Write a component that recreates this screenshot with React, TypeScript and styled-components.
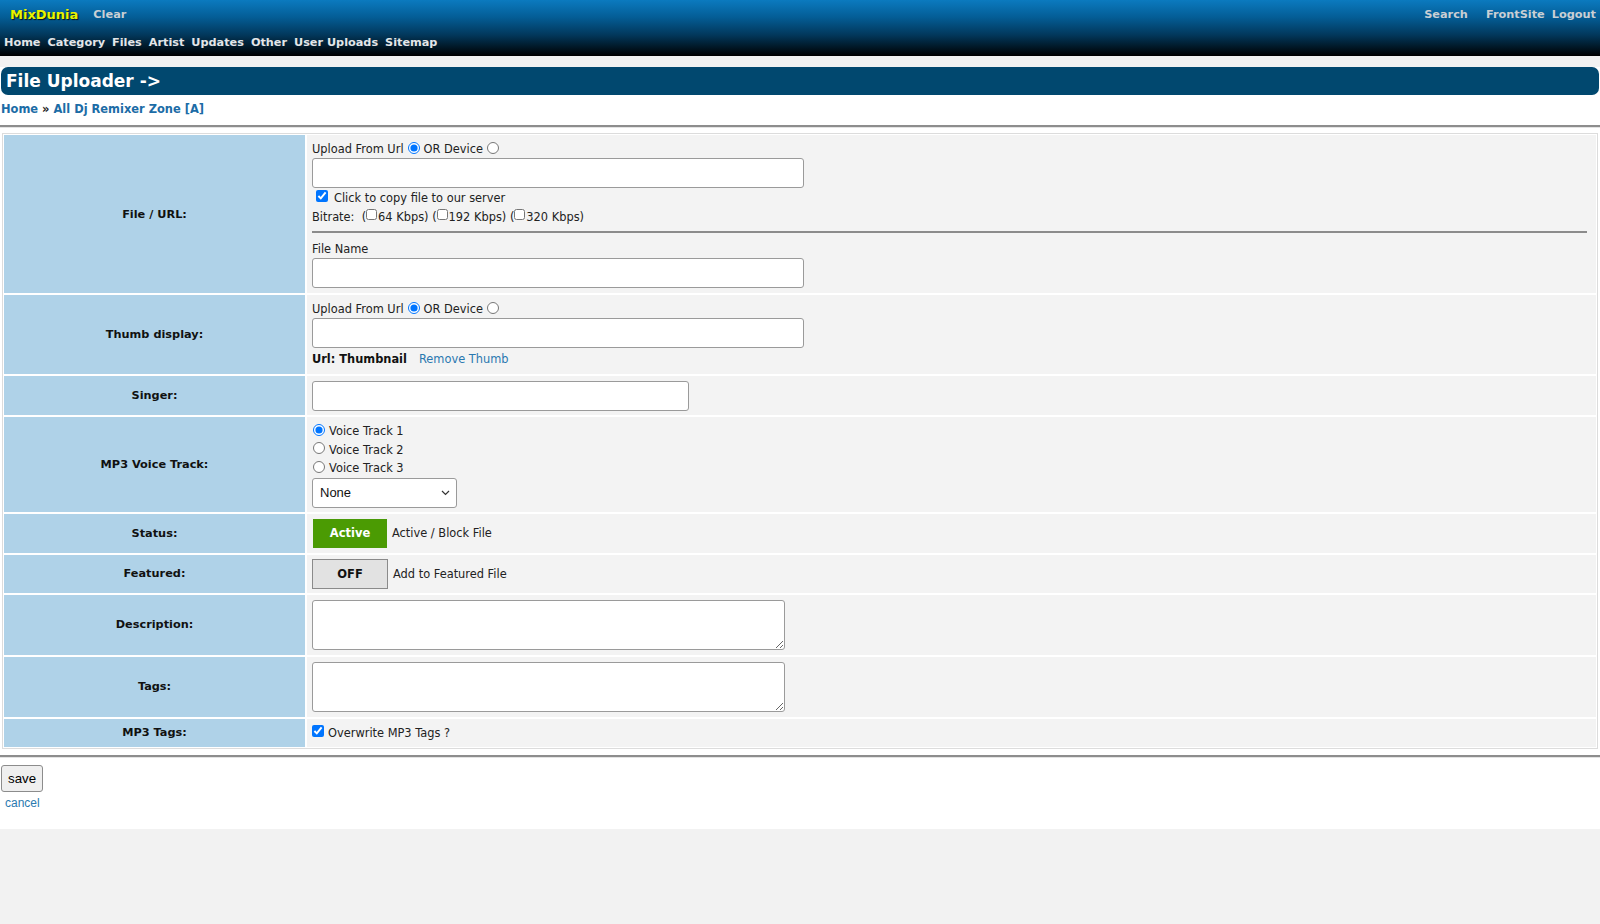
import React, { useState } from 'react'
import styled, { createGlobalStyle } from 'styled-components'

const GlobalStyle = createGlobalStyle`
  html, body {
    margin: 0;
    padding: 0;
    background: #f2f2f2;
    font-family: "DejaVu Sans", Verdana, sans-serif;
  }
  * { box-sizing: border-box; }
`

const Header = styled.header`
  height: 56px;
  background: linear-gradient(#0b7abf 0%, #045e97 30%, #02385c 62%, #000 100%);
  display: flex;
  flex-direction: column;
`

const TopRow = styled.div`
  height: 28px;
  display: flex;
  align-items: center;
  padding: 0 4px 0 10px;
`

const Logo = styled.a`
  font-weight: bold;
  font-size: 13px;
  color: #e8f400;
  text-shadow: 1px 1px 1px #111;
  text-decoration: none;
`

const TopLink = styled.a<{ $gap?: number }>`
  font-weight: bold;
  font-size: 11.3px;
  color: #c9cfd4;
  text-decoration: none;
  margin-left: ${p => p.$gap ?? 0}px;
`

const Spacer = styled.div`
  flex: 1;
`

const NavRow = styled.nav`
  height: 28px;
  display: flex;
  align-items: center;
  gap: 7px;
  padding: 0 4px;
`

const NavLink = styled.a`
  font-weight: bold;
  font-size: 11.25px;
  color: #e4e6e8;
  text-decoration: none;
`

const Main = styled.main`
  margin-top: 11px;
  background: #fff;
  padding-bottom: 19px;
`

const TitleBar = styled.h1`
  margin: 0 1px;
  height: 28px;
  border-radius: 7px;
  background: #01486f;
  color: #fff;
  font-size: 17px;
  font-weight: bold;
  line-height: 28px;
  padding-left: 5px;
`

const Crumbs = styled.div`
  padding: 7px 1px 0;
  height: 26px;
  font-size: 11.45px;
  font-weight: bold;
  color: #222;
`

const CrumbLink = styled.a`
  color: #1c6ca6;
  text-decoration: none;
`

const Rule = styled.hr<{ $after?: boolean }>`
  margin: ${p => (p.$after ? '6px 0 7px' : '4px 0 5px')};
  border: 0;
  border-top: 2px solid #8d8d8d;
  border-bottom: 1px solid #e3e3e3;
`

const FormGrid = styled.div`
  margin: 0 2px;
  border: 1px solid #dcdcdc;
  padding: 1px;
  display: grid;
  grid-template-columns: 301px 1fr;
  gap: 2px;
`

const LabelCell = styled.div`
  background: #afd2e8;
  display: flex;
  align-items: center;
  justify-content: center;
  font-weight: bold;
  font-size: 11.3px;
  color: #111;
`

const ValueCell = styled.div<{ $pad?: string }>`
  background: #f3f3f3;
  padding: ${p => p.$pad ?? '5px 5px'};
  font-size: 11.4px;
  color: #222;
`

const Line = styled.div<{ $h?: number }>`
  height: ${p => p.$h ?? 18}px;
  display: flex;
  align-items: center;
  white-space: pre;
`

const Radio = styled.input.attrs({ type: 'radio' })`
  margin: 0 4px 3px 4px;
  width: 12px;
  height: 12px;
`

const LeftRadio = styled(Radio)`
  margin: 0 4px 3px 1px;
`

const Check = styled.input.attrs({ type: 'checkbox' })<{ $small?: boolean }>`
  margin: ${p => (p.$small ? '0 1px 5px 0' : '0 6px 3px 4px')};
  width: ${p => (p.$small ? 11 : 12)}px;
  height: ${p => (p.$small ? 11 : 12)}px;
`

const TextBox = styled.input<{ $w: number }>`
  display: block;
  width: ${p => p.$w}px;
  height: 30px;
  border: 1px solid #9a9a9a;
  border-radius: 3px;
  background: #fff;
  font-size: 12px;
  padding: 0 6px;
`

const CellRule = styled.hr`
  margin: 4px 4px 7px 0;
  border: 0;
  border-top: 2px solid #8b8b8b;
`

const Bold = styled.span`
  font-weight: bold;
  color: #111;
`

const BlueLink = styled.a<{ $gap?: number }>`
  color: #2a78b0;
  text-decoration: none;
  margin-left: ${p => p.$gap ?? 0}px;
`

const SelectWrap = styled.div`
  position: relative;
  width: 145px;
  height: 30px;
`

const Select = styled.select`
  display: block;
  appearance: none;
  width: 145px;
  height: 30px;
  border: 1px solid #9a9a9a;
  border-radius: 3px;
  background: #fff;
  font-family: "Liberation Sans", Arial, sans-serif;
  font-size: 13px;
  padding: 0 7px;
  color: #111;
`

const Chevron = styled.svg`
  position: absolute;
  right: 7px;
  top: 12px;
  pointer-events: none;
`

const ButtonRow = styled.div`
  display: flex;
  align-items: center;
  gap: 5px;
`

const Toggle = styled.button<{ $on: boolean }>`
  width: ${p => (p.$on ? 74 : 76)}px;
  height: ${p => (p.$on ? 29 : 30)}px;
  margin-left: ${p => (p.$on ? 1 : 0)}px;
  border: 1px solid ${p => (p.$on ? '#4a9a08' : '#8a8a8a')};
  background: ${p => (p.$on ? '#4b9b03' : '#e2e2e2')};
  color: ${p => (p.$on ? '#fff' : '#111')};
  font-family: "DejaVu Sans", Verdana, sans-serif;
  font-weight: bold;
  font-size: 11.5px;
  padding: 0;
  cursor: pointer;
`

const TextArea = styled.textarea`
  display: block;
  width: 473px;
  height: 50px;
  border: 1px solid #9a9a9a;
  border-radius: 3px;
  background: #fff;
  resize: both;
`

const Footer = styled.div`
  padding: 0 1px;
`

const SaveButton = styled.button`
  display: block;
  height: 27px;
  padding: 0 6px;
  font-family: "Liberation Sans", Arial, sans-serif;
  font-size: 13.3px;
  color: #000;
  background: #efefef;
  border: 1px solid #8c8c8c;
  border-radius: 3px;
`

const CancelLink = styled.a`
  display: block;
  margin: 4px 0 0 4px;
  font-family: "Liberation Sans", Arial, sans-serif;
  font-size: 12px;
  color: #2a7ab0;
  text-decoration: none;
`

export default function App() {
  const [active] = useState(true)
  const [featured] = useState(false)

  return (
    <>
      <GlobalStyle />
      <Header>
        <TopRow>
          <Logo href="#">MixDunia</Logo>
          <TopLink href="#" $gap={15}>Clear</TopLink>
          <Spacer />
          <TopLink href="#">Search</TopLink>
          <TopLink href="#" $gap={18}>FrontSite</TopLink>
          <TopLink href="#" $gap={7}>Logout</TopLink>
        </TopRow>
        <NavRow>
          {['Home', 'Category', 'Files', 'Artist', 'Updates', 'Other', 'User Uploads', 'Sitemap'].map(n => (
            <NavLink key={n} href="#">{n}</NavLink>
          ))}
        </NavRow>
      </Header>

      <Main>
        <TitleBar>File Uploader -&gt;</TitleBar>
        <Crumbs>
          <CrumbLink href="#">Home</CrumbLink> » <CrumbLink href="#">All Dj Remixer Zone [A]</CrumbLink>
        </Crumbs>
        <Rule />

        <FormGrid>
          <LabelCell>File / URL:</LabelCell>
          <ValueCell>
            <Line>Upload From Url<Radio name="src1" defaultChecked />OR Device<Radio name="src1" /></Line>
            <TextBox $w={492} />
            <Line $h={19}><Check defaultChecked />Click to copy file to our server</Line>
            <Line $h={20}>
              Bitrate:  (<Check $small />64 Kbps) (<Check $small />192 Kbps) (<Check $small />320 Kbps)
            </Line>
            <CellRule />
            <Line>File Name</Line>
            <TextBox $w={492} />
          </ValueCell>

          <LabelCell>Thumb display:</LabelCell>
          <ValueCell>
            <Line>Upload From Url<Radio name="src2" defaultChecked />OR Device<Radio name="src2" /></Line>
            <TextBox $w={492} />
            <Line $h={21}><Bold>Url: Thumbnail</Bold><BlueLink href="#" $gap={12}>Remove Thumb</BlueLink></Line>
          </ValueCell>

          <LabelCell>Singer:</LabelCell>
          <ValueCell $pad="5px 5px 4px">
            <TextBox $w={377} />
          </ValueCell>

          <LabelCell>MP3 Voice Track:</LabelCell>
          <ValueCell $pad="5px 5px 4px">
            <Line $h={18.5}><LeftRadio name="voice" defaultChecked />Voice Track 1</Line>
            <Line $h={18.5}><LeftRadio name="voice" />Voice Track 2</Line>
            <Line $h={18.5}><LeftRadio name="voice" />Voice Track 3</Line>
            <SelectWrap>
              <Select defaultValue="None">
                <option>None</option>
                <option>Voice Track 1</option>
                <option>Voice Track 2</option>
                <option>Voice Track 3</option>
              </Select>
              <Chevron width="9" height="6" viewBox="0 0 9 6">
                <polyline points="1,1 4.5,4.5 8,1" fill="none" stroke="#333" strokeWidth="1.2" />
              </Chevron>
            </SelectWrap>
          </ValueCell>

          <LabelCell>Status:</LabelCell>
          <ValueCell $pad="5px 5px 5px">
            <ButtonRow>
              <Toggle $on={active}>Active</Toggle>
              <span>Active / Block File</span>
            </ButtonRow>
          </ValueCell>

          <LabelCell>Featured:</LabelCell>
          <ValueCell $pad="4px 5px 4px">
            <ButtonRow>
              <Toggle $on={featured}>OFF</Toggle>
              <span>Add to Featured File</span>
            </ButtonRow>
          </ValueCell>

          <LabelCell>Description:</LabelCell>
          <ValueCell $pad="5px 5px 5px">
            <TextArea />
          </ValueCell>

          <LabelCell>Tags:</LabelCell>
          <ValueCell $pad="5px 5px 5px">
            <TextArea />
          </ValueCell>

          <LabelCell>MP3 Tags:</LabelCell>
          <ValueCell>
            <Line><Check defaultChecked style={{ margin: '0 4px 3px 0' }} />Overwrite MP3 Tags ?</Line>
          </ValueCell>
        </FormGrid>

        <Rule $after />
        <Footer>
          <SaveButton>save</SaveButton>
          <CancelLink href="#">cancel</CancelLink>
        </Footer>
      </Main>
    </>
  )
}
